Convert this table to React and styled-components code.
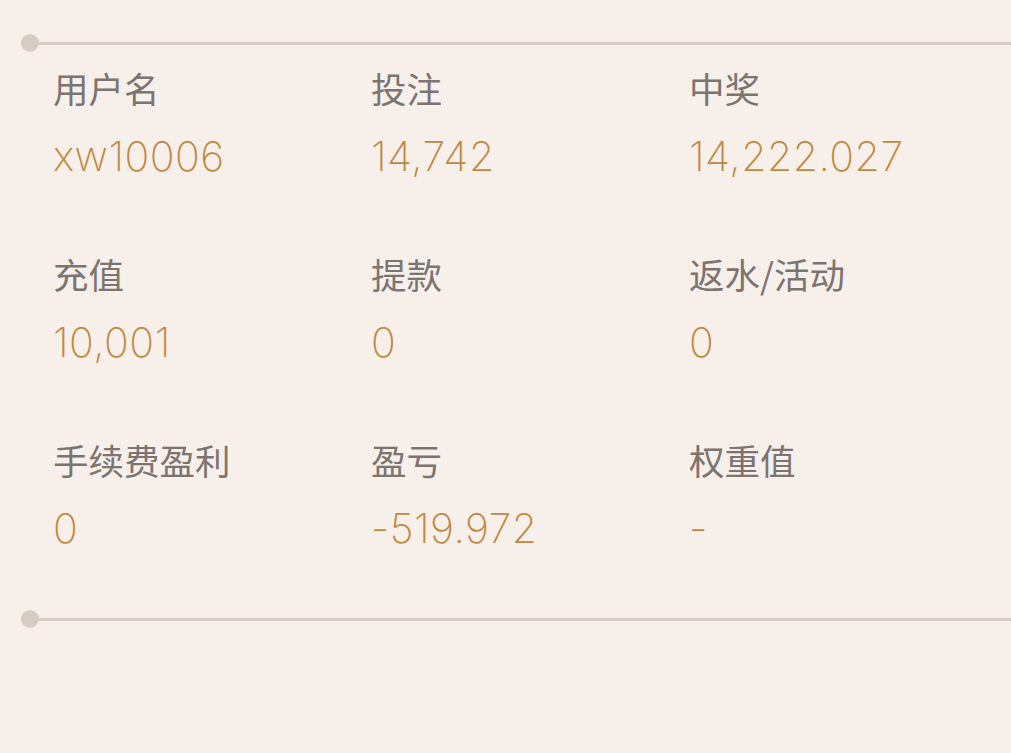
import styled, { createGlobalStyle } from "styled-components";

const GlobalStyle = createGlobalStyle`
  html, body {
    margin: 0;
    padding: 0;
    background: #f6efea;
  }
  body {
    width: 1011px;
    height: 753px;
    overflow: hidden;
  }
`;

const stats = [
  { label: "用户名", value: "xw10006" },
  { label: "投注", value: "14,742" },
  { label: "中奖", value: "14,222.027" },
  { label: "充值", value: "10,001" },
  { label: "提款", value: "0" },
  { label: "返水/活动", value: "0" },
  { label: "手续费盈利", value: "0" },
  { label: "盈亏", value: "-519.972" },
  { label: "权重值", value: "-" },
];

const Page = styled.div`
  padding-top: 34px;
  background: #f6efea;
  min-height: 753px;
  box-sizing: border-box;
`;

const Divider = styled.div`
  display: flex;
  align-items: center;
  margin-left: 21px;
  height: 18px;
  &::before {
    content: "";
    width: 18px;
    height: 18px;
    border-radius: 50%;
    background: #d8cbc3;
    flex: none;
  }
  &::after {
    content: "";
    flex: 1;
    height: 3px;
    background: #d8cbc3;
    margin-left: -2px;
  }
`;

const Grid = styled.div`
  display: grid;
  grid-template-columns: repeat(3, 318px);
  row-gap: 70px;
  padding: 16px 0 54px 53px;
`;

const Cell = styled.div`
  display: flex;
  flex-direction: column;
  gap: 20px;
`;

const Label = styled.div`
  font-family: "Noto Sans CJK SC", "Noto Sans", sans-serif;
  font-size: 35.5px;
  line-height: 40px;
  color: #7b7471;
`;

const Value = styled.div`
  font-family: Inter, "Noto Sans", sans-serif;
  font-weight: 250;
  font-size: 41px;
  line-height: 56px;
  letter-spacing: 0.5px;
  color: #bf893f;
  white-space: nowrap;
`;

export default function App() {
  return (
    <Page>
      <GlobalStyle />
      <Divider />
      <Grid>
        {stats.map((s) => (
          <Cell key={s.label}>
            <Label>{s.label}</Label>
            <Value>{s.value}</Value>
          </Cell>
        ))}
      </Grid>
      <Divider />
    </Page>
  );
}
